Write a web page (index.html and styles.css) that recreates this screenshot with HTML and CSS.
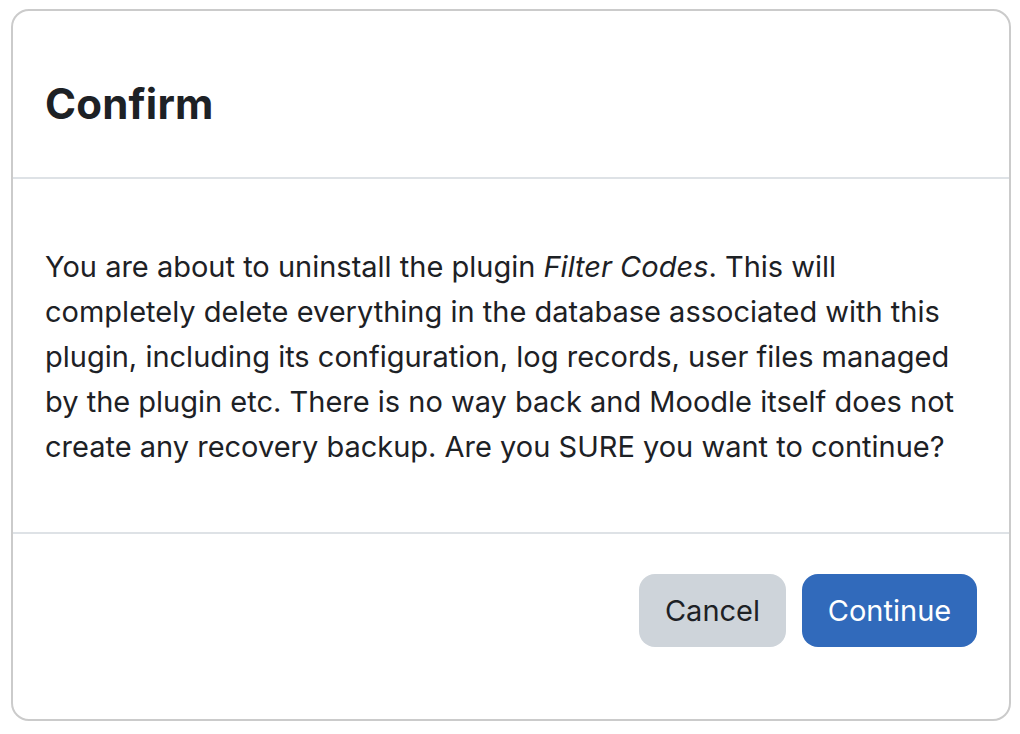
FILE: index.html
```html
<!DOCTYPE html>
<html lang="en">
<head>
<meta charset="utf-8">
<title>Confirm</title>
<link rel="stylesheet" href="styles.css">
</head>
<body>
<div class="modal">
  <div class="modal-header">
    <h5 class="modal-title">Confirm</h5>
  </div>
  <div class="modal-body">
    <p>You are about to uninstall the plugin <em>Filter Codes</em>. This will completely delete everything in the database associated with this plugin, including its configuration, log records, user files managed by the plugin etc. There is no way back and Moodle itself does not create any recovery backup. Are you SURE you want to continue?</p>
  </div>
  <div class="modal-footer">
    <button class="btn btn-secondary" type="button">Cancel</button>
    <button class="btn btn-primary" type="button">Continue</button>
  </div>
</div>
</body>
</html>
```
FILE: styles.css
```css
html, body {
  margin: 0;
  padding: 0;
  background: #fff;
}
body {
  padding: 9px 10px 0 11px;
  font-family: Inter, "Liberation Sans", sans-serif;
  color: #1d2125;
}
.modal {
  box-sizing: border-box;
  width: 1000px;
  height: 712px;
  border: 2px solid #cbcbcb;
  border-radius: 18px;
  display: flex;
  flex-direction: column;
}
.modal-header {
  height: 168px;
  box-sizing: border-box;
  padding: 20px 32px 0 32px;
  display: flex;
  align-items: center;
  border-bottom: 2px solid #dee2e6;
}
.modal-title {
  margin: 0;
  font-size: 42px;
  font-weight: 700;
  line-height: 50px;
  letter-spacing: 0.2px;
}
.modal-body {
  padding: 65px 32px 0 32px;
  height: 355px;
  box-sizing: border-box;
  border-bottom: 2px solid #dee2e6;
}
.modal-body p {
  margin: 0;
  font-size: 29px;
  line-height: 45px;
}
.modal-body em {
  font-style: italic;
}
.modal-footer {
  flex: 1;
  display: flex;
  justify-content: flex-end;
  align-items: flex-start;
  gap: 16px;
  padding: 40px 32px 0 32px;
}
.btn {
  font-family: inherit;
  font-size: 29px;
  line-height: 45px;
  height: 73px;
  padding: 0;
  border: none;
  border-radius: 16px;
  cursor: pointer;
}
.btn-secondary {
  background: #ced4da;
  color: #1d2125;
  width: 147px;
}
.btn-primary {
  background: #316abb;
  color: #fff;
  width: 175px;
}
```
